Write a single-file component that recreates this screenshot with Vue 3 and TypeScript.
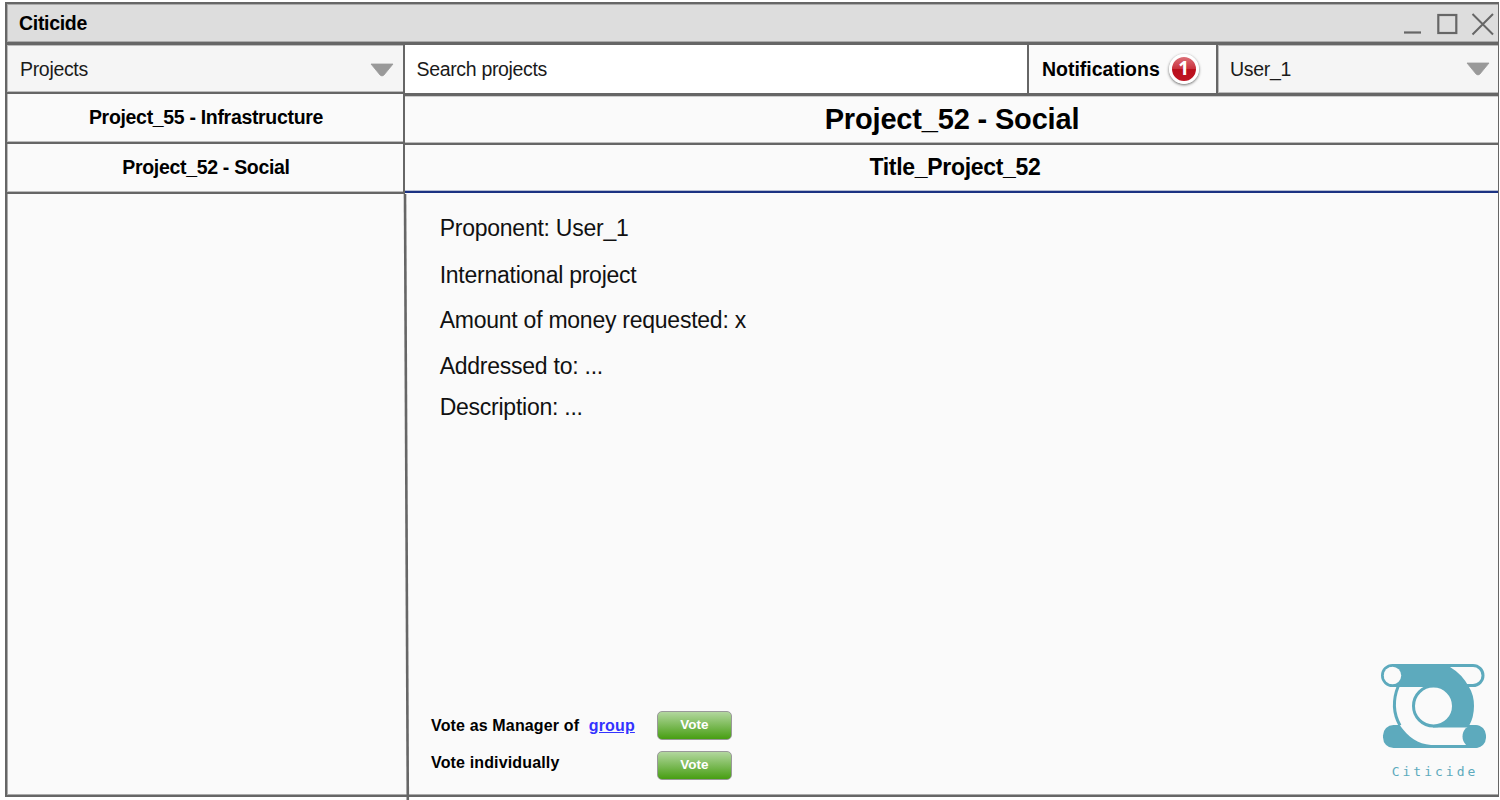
<script setup lang="ts">
interface Project {
  id: number
  category: string
}

const projects: Project[] = [
  { id: 55, category: 'Infrastructure' },
  { id: 52, category: 'Social' },
]

const details: string[] = [
  'Proponent: User_1',
  'International project',
  'Amount of money requested: x',
  'Addressed to: ...',
  'Description: ...',
]
</script>

<template>
  <div class="page">
    <div class="window">
      <header class="titlebar">
        <span class="app-name">Citicide</span>
        <svg class="controls" width="92" height="26" viewBox="0 0 92 26" fill="none" stroke="#666">
          <path d="M1 20.5H18" stroke-width="2.2" />
          <rect x="35.3" y="3" width="18" height="18" stroke-width="2.2" />
          <path d="M69.5 2L90 22.5M90 2L69.5 22.5" stroke-width="2" />
        </svg>
      </header>

      <div class="columns">
        <aside class="sidebar">
          <div class="select projects-select">
            <span>Projects</span>
            <svg class="caret" width="24" height="14" viewBox="0 0 24 14"><path d="M1 1H23L14 12Q12 14 10 12Z" fill="#999" stroke="#999" stroke-width="0.8" stroke-linejoin="round" /></svg>
          </div>
          <div v-for="p in projects" :key="p.id" class="side-item">Project_{{ p.id }} - {{ p.category }}</div>
        </aside>

        <main class="main">
          <div class="toolbar">
            <div class="search">Search projects</div>
            <div class="notifications">
              <span>Notifications</span>
              <span class="badge">1</span>
            </div>
            <div class="select user-select">
              <span>User_1</span>
              <svg class="caret" width="24" height="14" viewBox="0 0 24 14"><path d="M1 1H23L14 12Q12 14 10 12Z" fill="#999" stroke="#999" stroke-width="0.8" stroke-linejoin="round" /></svg>
            </div>
          </div>
          <h1 class="heading">Project_52 - Social</h1>
          <h2 class="subheading">Title_Project_52</h2>
          <section class="content">
            <p v-for="(d, i) in details" :key="i" class="detail">{{ d }}</p>
            <footer class="bottom">
              <div class="votes">
                <div class="vote-row">
                  <span class="vote-label">Vote as Manager of <a class="link">group</a></span>
                  <button class="vote-btn">Vote</button>
                </div>
                <div class="vote-row second">
                  <span class="vote-label">Vote individually</span>
                  <button class="vote-btn">Vote</button>
                </div>
              </div>
              <div class="logo">
                <svg width="105" height="84" viewBox="0 0 105 84">
                  <rect x="1.5" y="1.5" width="100.5" height="20" rx="10" fill="#fafafa" stroke="#5daabd" stroke-width="3" />
                  <rect x="2" y="61" width="103" height="23" rx="10.5" fill="#5daabd" />
                  <path d="M11 0H54Q63 0 69 3Q81 10 88 23Q93 31 93 42Q93 53 88 62V66H52V23H11Z" fill="#5daabd" />
                  <path d="M52 23H17.5C12 36 12 50 19 61.5C27 73 37 80 50 81H90V63.5H52Z" fill="#fafafa" />
                  <path d="M17.3 22C12 35 12 49 19 61.5" fill="none" stroke="#5daabd" stroke-width="3" />
                  <circle cx="52.5" cy="42" r="20" fill="#fafafa" stroke="#5daabd" stroke-width="3" />
                  <circle cx="11.5" cy="11.5" r="8.7" fill="#fafafa" />
                  <circle cx="93" cy="72.5" r="11.5" fill="#5daabd" />
                </svg>
                <span class="logo-text">Citicide</span>
              </div>
            </footer>
          </section>
        </main>
      </div>
    </div>
    <svg class="divider" width="10" height="606" viewBox="0 0 10 606"><path d="M2 0L4.8 606" stroke="#666" stroke-width="2.6" /></svg>
  </div>
</template>

<style>
body {
  margin: 0;
  background: #fff;
  overflow: hidden;
}
</style>

<style scoped>
.page {
  position: relative;
  box-sizing: border-box;
  width: 1500px;
  height: 800px;
  padding: 2px 1px 3px 5px;
  overflow: hidden;
  font-family: "Liberation Sans", Arial, sans-serif;
  color: #000;
  --line: #666;
}
.window {
  box-sizing: border-box;
  height: 795px;
  display: flex;
  flex-direction: column;
  background: #fafafa;
  border: solid var(--line);
  border-width: 2px 1px 2px 2px;
  box-shadow: inset 1px -1px 0 #aaa;
}
.titlebar {
  box-sizing: border-box;
  height: 41px;
  flex: none;
  display: flex;
  align-items: center;
  justify-content: space-between;
  padding: 0 3px 0 12px;
  background: #ddd;
  border-bottom: 3px solid var(--line);
  box-shadow: inset 1px 1px 0 #aaa, inset 0 -1px 0 #aaa;
}
.controls {
  position: relative;
  top: 2px;
}
.app-name {
  font-size: 19.5px;
  font-weight: bold;
  letter-spacing: -0.3px;
}
.columns {
  flex: 1;
  display: flex;
  min-height: 0;
}
.sidebar {
  width: 398px;
  flex: none;
}
.select {
  box-sizing: border-box;
  display: flex;
  align-items: center;
  justify-content: space-between;
  background: #f5f5f5;
  font-size: 19.5px;
  letter-spacing: -0.32px;
  color: #1a1a1a;
  box-shadow: inset 1px 1px 0 #bbb, inset 0 -1px 0 #bbb;
}
.projects-select {
  height: 49px;
  padding: 2px 9px 0 13px;
  border-right: 2px solid var(--line);
  border-bottom: 2px solid var(--line);
}
.side-item {
  box-sizing: border-box;
  height: 50px;
  padding: 0 0 1px 2px;
  display: flex;
  align-items: center;
  justify-content: center;
  border-right: 2px solid var(--line);
  border-bottom: 2px solid var(--line);
  box-shadow: inset 1px -1px 0 #bbb;
  font-size: 19.5px;
  font-weight: bold;
  letter-spacing: -0.32px;
}
.main {
  flex: 1;
  display: flex;
  flex-direction: column;
}
.toolbar {
  box-sizing: border-box;
  height: 51px;
  display: flex;
  border-bottom: 3px solid var(--line);
}
.search {
  box-sizing: border-box;
  width: 624px;
  display: flex;
  align-items: center;
  padding: 1px 0 0 11.5px;
  background: #fff;
  border-right: 2px solid var(--line);
  font-size: 19.5px;
  letter-spacing: -0.33px;
  color: #1a1a1a;
}
.notifications {
  box-sizing: border-box;
  width: 189px;
  display: flex;
  align-items: center;
  padding-left: 13px;
  gap: 9px;
  border-right: 2px solid var(--line);
  font-size: 19.5px;
  font-weight: bold;
  letter-spacing: -0.03px;
}
.badge {
  box-sizing: border-box;
  width: 30px;
  height: 30px;
  border: 3px solid #fff;
  border-radius: 50%;
  background: linear-gradient(#dc7078 0%, #c9303c 50%, #b90f1c 51%, #c01523 100%);
  box-shadow: 0 1px 3px rgba(0, 0, 0, 0.6);
  color: #fff;
  font: bold 19px/22px "Open Sans", sans-serif;
  text-align: center;
}
.user-select {
  flex: 1;
  padding: 0 8px 0 12px;
}
.heading,
.subheading {
  box-sizing: border-box;
  margin: 0;
  display: flex;
  align-items: center;
  justify-content: center;
  font-weight: bold;
}
.heading {
  height: 49px;
  padding: 0 0 1px 1px;
  border-bottom: 2px solid var(--line);
  box-shadow: inset 0 1px 0 #ccc, inset 0 -1px 0 #bbb;
  font-size: 29px;
  letter-spacing: -0.17px;
}
.subheading {
  height: 48px;
  padding: 0 0 1px 7px;
  border-bottom: 2px solid #1b3282;
  box-shadow: inset 0 -1px 0 #b5bdd2;
  font-size: 23px;
  letter-spacing: -0.3px;
}
.content {
  flex: 1;
  display: flex;
  flex-direction: column;
  padding: 22px 12px 0 26px;
}
.detail {
  margin: 0 0 20px 8.7px;
  font-size: 23px;
  letter-spacing: -0.25px;
  line-height: 26px;
  color: #111;
}
.detail:nth-child(1) {
  margin-bottom: 21px;
}
.detail:nth-child(2) {
  margin-bottom: 19px;
}
.detail:nth-child(4) {
  margin-bottom: 15px;
}
.bottom {
  margin-top: auto;
  display: flex;
  justify-content: space-between;
  align-items: flex-end;
}
.votes {
  padding-bottom: 15px;
}
.vote-row {
  display: flex;
  align-items: center;
}
.second {
  margin-top: 10px;
}
.vote-label {
  width: 226px;
  padding-top: 2px;
  box-sizing: border-box;
  font-size: 16px;
  font-weight: bold;
  letter-spacing: 0.15px;
  white-space: nowrap;
}
.second .vote-label {
  margin-top: -6px;
}
.link {
  margin-left: 5px;
  color: #33f;
  text-decoration: underline;
}
.vote-btn {
  box-sizing: border-box;
  width: 75px;
  height: 29px;
  margin-top: 1px;
  padding: 0 0 2px;
  border: 1px solid #999;
  border-radius: 5px;
  background: linear-gradient(#b2d79e, #479e12);
  font: bold 13.5px "Liberation Sans", Arial, sans-serif;
  color: #fff;
}
.logo {
  display: flex;
  flex-direction: column;
  align-items: center;
  padding-bottom: 15px;
}
.logo-text {
  margin: 16px 0 0 3px;
  font: 13px/16px "DejaVu Sans Mono", monospace;
  letter-spacing: 3px;
  color: #5daabd;
}
.divider {
  position: absolute;
  left: 403px;
  top: 194px;
}
</style>
